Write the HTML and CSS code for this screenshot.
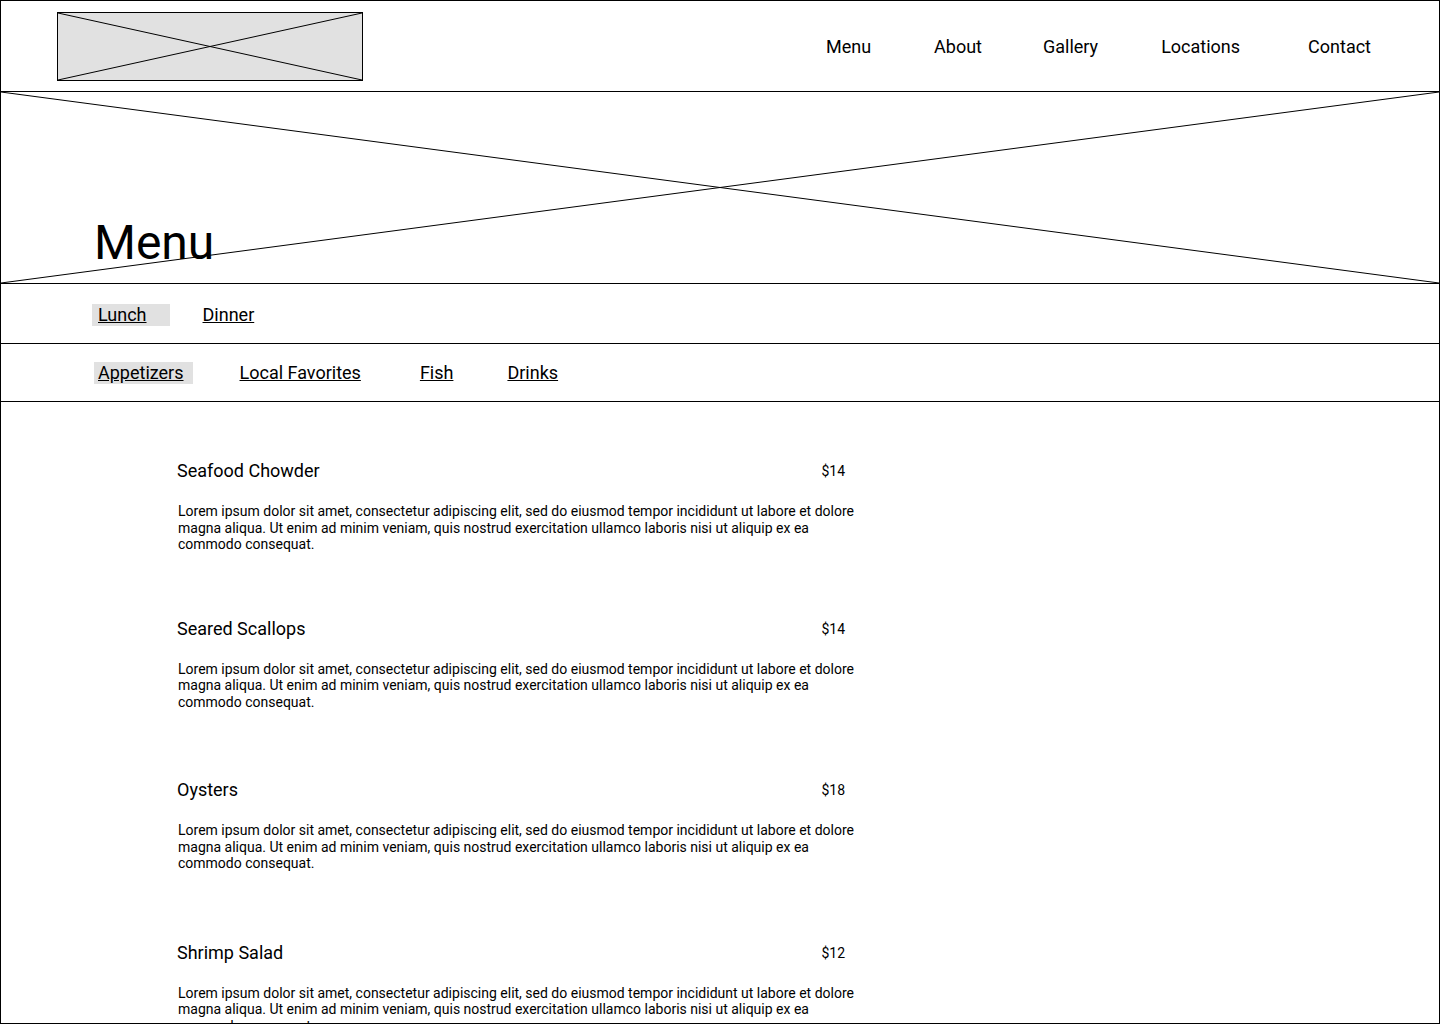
FILE: index.html
```html
<!DOCTYPE html>
<html lang="en">
<head>
    <meta charset="UTF-8">
    <meta name="viewport" content="width=device-width, initial-scale=1.0">
    <title>Menu</title>
    <link rel="stylesheet" href="styles.css">
</head>
<body>
    <div class="page">
        <!-- Header -->
        <header class="header">
            <div class="logo">
                <svg class="cross" viewBox="0 0 100 100" preserveAspectRatio="none">
                    <line x1="0" y1="0" x2="100" y2="100" vector-effect="non-scaling-stroke"/>
                    <line x1="0" y1="100" x2="100" y2="0" vector-effect="non-scaling-stroke"/>
                </svg>
            </div>
            <nav class="nav">
                <a href="#">Menu</a>
                <a href="#">About</a>
                <a href="#" class="gallery">Gallery</a>
                <a href="#">Locations</a>
                <a href="#" class="last">Contact</a>
            </nav>
        </header>

        <!-- Hero -->
        <section class="hero">
            <svg class="cross" viewBox="0 0 100 100" preserveAspectRatio="none">
                <line x1="0" y1="0" x2="100" y2="100" vector-effect="non-scaling-stroke"/>
                <line x1="0" y1="100" x2="100" y2="0" vector-effect="non-scaling-stroke"/>
            </svg>
            <h1>Menu</h1>
        </section>

        <!-- Meal tabs -->
        <div class="tabs meals">
            <a href="#" class="active">Lunch</a>
            <a href="#">Dinner</a>
        </div>

        <!-- Category tabs -->
        <div class="tabs categories">
            <a href="#" class="active">Appetizers</a>
            <a href="#">Local Favorites</a>
            <a href="#">Fish</a>
            <a href="#">Drinks</a>
        </div>

        <!-- Items -->
        <main class="items">
            <div class="item">
                <div class="item-head">
                    <span class="item-name">Seafood Chowder</span>
                    <span class="price">$14</span>
                </div>
                <p>Lorem ipsum dolor sit amet, consectetur adipiscing elit, sed do eiusmod tempor incididunt ut labore et dolore magna aliqua. Ut enim ad minim veniam, quis nostrud exercitation ullamco laboris nisi ut aliquip ex ea commodo consequat.</p>
            </div>
            <div class="item">
                <div class="item-head">
                    <span class="item-name">Seared Scallops</span>
                    <span class="price">$14</span>
                </div>
                <p>Lorem ipsum dolor sit amet, consectetur adipiscing elit, sed do eiusmod tempor incididunt ut labore et dolore magna aliqua. Ut enim ad minim veniam, quis nostrud exercitation ullamco laboris nisi ut aliquip ex ea commodo consequat.</p>
            </div>
            <div class="item">
                <div class="item-head">
                    <span class="item-name">Oysters</span>
                    <span class="price">$18</span>
                </div>
                <p>Lorem ipsum dolor sit amet, consectetur adipiscing elit, sed do eiusmod tempor incididunt ut labore et dolore magna aliqua. Ut enim ad minim veniam, quis nostrud exercitation ullamco laboris nisi ut aliquip ex ea commodo consequat.</p>
            </div>
            <div class="item">
                <div class="item-head">
                    <span class="item-name">Shrimp Salad</span>
                    <span class="price">$12</span>
                </div>
                <p>Lorem ipsum dolor sit amet, consectetur adipiscing elit, sed do eiusmod tempor incididunt ut labore et dolore magna aliqua. Ut enim ad minim veniam, quis nostrud exercitation ullamco laboris nisi ut aliquip ex ea commodo consequat.</p>
            </div>
        </main>
    </div>
</body>
</html>
```

FILE: styles.css
```css
body {
    margin: 0;
    font-family: 'Roboto', 'Liberation Sans', sans-serif;
    color: black;
    background-color: white;
}
a {
    color: black;
}
.page {
    width: 1440px;
    height: 1024px;
    box-sizing: border-box;
    border: 1px solid black;
    overflow: hidden;
}
.cross {
    position: absolute;
    top: 0;
    left: 0;
    width: 100%;
    height: 100%;
}
.cross line {
    stroke: black;
    stroke-width: 1;
}

/* Header */
.header {
    height: 90px;
    border-bottom: 1px solid black;
    display: flex;
    align-items: center;
    justify-content: space-between;
}
.logo {
    position: relative;
    width: 304px;
    height: 67px;
    margin-left: 56px;
    margin-top: 1px;
    background-color: #e1e1e1;
    border: 1px solid black;
}
.nav {
    display: flex;
    gap: 63px;
    margin-right: 68px;
    font-size: 18px;
}
.nav a {
    text-decoration: none;
}
.nav .gallery {
    margin-left: -2px;
}
.nav .last {
    margin-left: 5px;
}

/* Hero */
.hero {
    position: relative;
    height: 191px;
    border-bottom: 1px solid black;
}
.hero h1 {
    position: relative;
    margin: 0;
    padding: 123px 0 0 93px;
    font-size: 48px;
    font-weight: 400;
    line-height: 56px;
}

/* Tabs */
.tabs {
    display: flex;
    align-items: center;
    border-bottom: 1px solid black;
    font-size: 18px;
}
.tabs a {
    line-height: 22px;
}
.tabs .active {
    background-color: #e1e1e1;
}
.meals {
    height: 57px;
    padding: 2px 0 0 91px;
    gap: 33px;
}
.meals .active {
    padding: 0 23px 0 6px;
}
.categories {
    height: 57px;
    padding-left: 93px;
}
.categories .active {
    padding: 0 9px 0 4px;
}
.categories a:nth-child(2) {
    margin-left: 47px;
}
.categories a:nth-child(3) {
    margin-left: 59px;
}
.categories a:nth-child(4) {
    margin-left: 54px;
}

/* Items */
.items {
    padding: 58px 0 0 176px;
}
.item {
    width: 682px;
    margin-bottom: 65px;
}
.item:nth-child(2) {
    margin-bottom: 69px;
}
.item:nth-child(3) {
    margin-bottom: 70px;
}
.item-head {
    display: flex;
    align-items: center;
    justify-content: space-between;
    padding-right: 14px;
}
.item-name {
    font-size: 18px;
    line-height: 22px;
}
.price {
    font-size: 14px;
}
.item p {
    margin: 21px 0 0 1px;
    font-size: 14px;
    line-height: 16.5px;
}
```
